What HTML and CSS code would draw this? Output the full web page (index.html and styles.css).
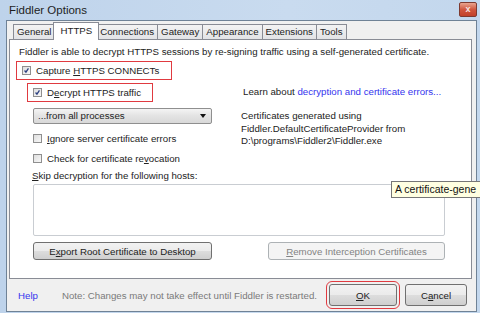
FILE: index.html
```html
<!DOCTYPE html>
<html lang="en">

<head>
    <meta charset="UTF-8">
    <title>Fiddler Options</title>
    <link rel="stylesheet" href="styles.css">
</head>

<body>
    <div class="window">
        <div class="titlebar">
            <span class="title">Fiddler Options</span>
            <span class="close">x</span>
        </div>

        <div class="frame">
            <div class="client">
                <div class="tabs">
                    <span class="tab">General</span>
                    <span class="tab active">HTTPS</span>
                    <span class="tab">Connections</span>
                    <span class="tab">Gateway</span>
                    <span class="tab">Appearance</span>
                    <span class="tab">Extensions</span>
                    <span class="tab">Tools</span>
                </div>

                <div class="panel">
                    <p class="intro">Fiddler is able to decrypt HTTPS sessions by re-signing traffic using a self-generated certificate.</p>

                    <label class="check marked capture">
                        <span class="box"><svg viewBox="0 0 9 9"><path d="M2 4.5 L3.8 6.6 L7 1.8" /></svg></span>
                        <span>Capture <u>H</u>TTPS CONNECTs</span>
                    </label>

                    <div class="cols">
                        <div class="left-col">
                            <label class="check marked decrypt">
                                <span class="box"><svg viewBox="0 0 9 9"><path d="M2 4.5 L3.8 6.6 L7 1.8" /></svg></span>
                                <span>D<u>e</u>crypt HTTPS traffic</span>
                            </label>
                            <div class="select">...from all processes<span class="arrow"></span></div>
                            <label class="check option">
                                <span class="box"></span>
                                <span><u>I</u>gnore server certificate errors</span>
                            </label>
                            <label class="check option">
                                <span class="box"></span>
                                <span>Check for certificate re<u>v</u>ocation</span>
                            </label>
                        </div>
                        <div class="right-col">
                            <p class="learn">Learn about <a href="#">decryption and certificate errors...</a></p>
                            <p class="certinfo">Certificates generated using<br>Fiddler.DefaultCertificateProvider from<br>D:\programs\Fiddler2\Fiddler.exe</p>
                        </div>
                    </div>

                    <div class="skip-label"><u>S</u>kip decryption for the following hosts:</div>
                    <div class="hosts"></div>

                    <div class="panel-buttons">
                        <button class="btn export">E<u>x</u>port Root Certificate to Desktop</button>
                        <button class="btn remove" disabled><u>R</u>emove Interception Certificates</button>
                    </div>
                </div>

                <div class="footer">
                    <a href="#" class="help">Help</a>
                    <span class="note">Note: Changes may not take effect until Fiddler is restarted.</span>
                    <button class="btn ok"><u>O</u>K</button>
                    <button class="btn cancel">C<u>a</u>ncel</button>
                </div>
            </div>
        </div>

        <div class="tooltip">A certificate-gene</div>
    </div>
</body>

</html>
```

FILE: styles.css
```css
body {
    margin: 0;
    width: 480px;
    height: 313px;
    overflow: hidden;
    font-family: 'Liberation Sans', Arial, sans-serif;
    font-size: 9.7px;
    color: #222;
}

u {
    text-decoration-thickness: 1px;
}

.window {
    position: relative;
    height: 313px;
    display: flex;
    flex-direction: column;
    background: linear-gradient(90deg, #bed3eb, #c9dbef 60%, #c3d7ed);
    overflow: hidden;
}

.titlebar {
    height: 20px;
    display: flex;
    align-items: center;
    padding-left: 9px;
}

.title {
    font-size: 11.5px;
    color: #1e1e1e;
}

.close {
    align-self: flex-start;
    margin: 2px 3px 0 auto;
    width: 18px;
    height: 15px;
    box-sizing: border-box;
    border: 1px solid #7e3a30;
    border-radius: 2px;
    background: linear-gradient(#e9a48f, #d0573f 50%, #c2412b);
    color: #f4e4e0;
    font-size: 9px;
    font-weight: bold;
    line-height: 12px;
    text-align: center;
}

.frame {
    flex: 1;
    display: flex;
    padding: 0 3px 1px 6px;
}

.client {
    flex: 1;
    display: flex;
    flex-direction: column;
    border: 1px solid #6f8296;
    background: #f0f0f0;
}

/* tab strip */
.tabs {
    display: flex;
    height: 18px;
    margin: 0 4px 0 2px;
    padding-left: 4px;
    align-items: flex-end;
}

.tab {
    height: 15px;
    box-sizing: border-box;
    padding: 0 3px;
    margin-left: -1px;
    border: 1px solid #898c95;
    border-bottom: none;
    background: linear-gradient(#f3f3f3, #e2e3e6);
    line-height: 14px;
    color: #222;
}

.tab:first-child {
    margin-left: 0;
}

.tab.active {
    position: relative;
    z-index: 1;
    height: 18px;
    margin: 0 -2px -1px -2px;
    padding: 0 6px;
    background: #fff;
    line-height: 16px;
}

/* tab page */
.panel {
    height: 240px;
    box-sizing: border-box;
    margin: 0 4px 0 2px;
    border: 1px solid #898c95;
    background: #fff;
}

.intro {
    margin: 0;
    padding: 6px 0 0 9px;
    line-height: 12px;
}

.check {
    display: flex;
    align-items: center;
    gap: 5px;
    height: 14px;
}

.box {
    width: 9px;
    height: 9px;
    box-sizing: border-box;
    border: 1px solid #8f8f8f;
    background: linear-gradient(135deg, #dedede, #f8f8f8);
    flex: none;
}

.box svg {
    display: block;
    width: 7px;
    height: 7px;
}

.box path {
    fill: none;
    stroke: #2b3f80;
    stroke-width: 1.6;
}

.marked {
    height: 19px;
    box-sizing: border-box;
    padding-left: 5px;
    border: 1px solid #e03a40;
}

.capture {
    margin: 3px 0 0 6px;
    width: 156px;
}

.cols {
    display: flex;
    margin-top: 3px;
}

.left-col {
    width: 231px;
    padding-left: 17px;
    box-sizing: border-box;
}

.decrypt {
    width: 126px;
}

.select {
    position: relative;
    width: 179px;
    height: 16px;
    box-sizing: border-box;
    margin: 6px 0 0 6px;
    padding-left: 4px;
    border: 1px solid #8f8f8f;
    border-radius: 2px;
    background: linear-gradient(#f4f4f4, #e3e3e3 50%, #d9d9d9);
    line-height: 14px;
}

.arrow {
    position: absolute;
    right: 5px;
    top: 5px;
    border-left: 3px solid transparent;
    border-right: 3px solid transparent;
    border-top: 4px solid #111;
}

.option {
    margin: 7px 0 0 6px;
}

.option + .option {
    margin-top: 6px;
}

.right-col {
    padding-top: 3px;
}

.learn {
    margin: 0 0 0 2px;
    line-height: 12px;
}

.learn a {
    color: #3434ee;
    text-decoration: none;
}

.certinfo {
    margin: 12px 0 0;
    line-height: 12.5px;
}

.skip-label {
    margin: 5px 0 0 22px;
    line-height: 12px;
}

.hosts {
    width: 412px;
    height: 52px;
    box-sizing: border-box;
    margin: 2px 0 0 23px;
    border: 1px solid #c9cdd2;
    border-radius: 2px;
}

.panel-buttons {
    display: flex;
    justify-content: space-between;
    width: 412px;
    margin: 6px 0 0 23px;
}

.btn {
    height: 18px;
    box-sizing: border-box;
    padding: 0;
    border: 1px solid #707070;
    border-radius: 3px;
    background: linear-gradient(#f2f2f2, #ebebeb 50%, #dddddd 51%, #cfcfcf);
    font-family: inherit;
    font-size: inherit;
    color: #222;
}

.export {
    width: 179px;
}

.remove {
    width: 177px;
    border-color: #adb2b5;
    background: #f4f4f4;
    color: #838383;
}

/* dialog footer */
.footer {
    flex: 1;
    display: flex;
    align-items: center;
    padding: 0 9px 0 11px;
}

.help {
    color: #3434ee;
    text-decoration: none;
}

.note {
    margin-left: 24px;
    color: #7a7a7a;
}

.ok {
    width: 68px;
    height: 22px;
    margin-left: auto;
    outline: 1px solid #e03a40;
    outline-offset: 2px;
}

.cancel {
    width: 62px;
    height: 22px;
    margin-left: 8px;
}

.tooltip {
    position: absolute;
    left: 391px;
    top: 181px;
    width: 95px;
    height: 17px;
    box-sizing: border-box;
    padding: 0 3px;
    border: 1px solid #767676;
    background: #ffffe1;
    line-height: 15px;
    font-size: 10.5px;
    color: #111;
    white-space: nowrap;
}
```
